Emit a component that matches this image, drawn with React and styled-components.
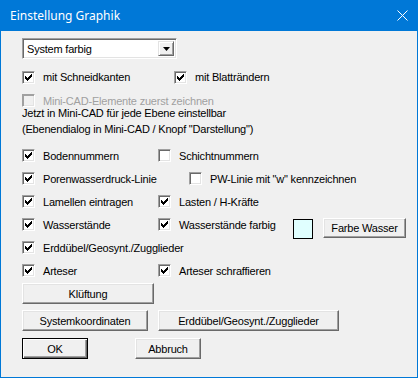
import React from "react";
import styled, { createGlobalStyle } from "styled-components";

const Global = createGlobalStyle`
  html, body { margin: 0; padding: 0; background: #f0f0f0; }
  * { box-sizing: border-box; }
`;

const Window = styled.div`
  width: 418px;
  height: 378px;
  border: 1px solid #0078d7;
  border-top: none;
  background: #f0f0f0;
  font-family: "Liberation Sans", Arial, sans-serif;
  font-size: 11px;
  letter-spacing: -0.2px;
  color: #000;
  display: flex;
  flex-direction: column;
`;

const TitleBar = styled.div`
  height: 31px;
  margin: 0 -1px;
  background: #0078d7;
  color: #fff;
  display: flex;
  align-items: center;
  justify-content: space-between;
  padding: 0 10px 0 10px;
  font-family: "Noto Sans", "Liberation Sans", sans-serif;
  font-size: 12px;
  letter-spacing: 0;
`;

const Body = styled.div`
  display: flex;
  flex-direction: column;
  padding-left: 21px;
`;

const Row = styled.div`
  display: flex;
  align-items: center;
  height: ${(p) => p.$h || 23}px;
  margin-top: ${(p) => p.$mt || 0}px;
`;

const Col = styled.div`
  width: ${(p) => p.$w}px;
  display: flex;
  align-items: center;
`;

const Check = styled.label`
  display: flex;
  align-items: center;
  gap: 8px;
  white-space: nowrap;
  color: ${(p) => (p.$disabled ? "#a0a0a0" : "#000")};
`;

const Box = styled.span`
  width: 13px;
  height: 13px;
  flex: none;
  display: flex;
  align-items: center;
  justify-content: center;
  background: ${(p) => (p.$disabled ? "#f0f0f0" : "#fff")};
  border: 1px solid;
  border-color: #a0a0a0 #fff #fff #a0a0a0;
  box-shadow: inset 1px 1px ${(p) => (p.$disabled ? "#a0a0a0" : "#696969")},
    inset -1px -1px #e3e3e3;
`;

const Label = styled.div`
  line-height: 13px;
  white-space: nowrap;
  margin-top: ${(p) => p.$mt || 0}px;
`;

const Button = styled.button`
  width: ${(p) => p.$w}px;
  height: ${(p) => p.$h || 21}px;
  margin-left: ${(p) => p.$ml || 0}px;
  padding: 0;
  font-family: inherit;
  font-size: 11px;
  letter-spacing: -0.2px;
  color: #000;
  background: #f0f0f0;
  border: 1px solid;
  border-color: ${(p) => (p.$default ? "#000" : "#fff #696969 #696969 #fff")};
  box-shadow: ${(p) =>
    p.$default
      ? "inset 1px 1px #fff, inset -1px -1px #696969, inset -2px -2px #a0a0a0"
      : "inset -1px -1px #a0a0a0, inset 1px 1px #e3e3e3"};
`;

const Select = styled.div`
  width: 155px;
  height: 21px;
  margin-top: 7px;
  background: #fff;
  border: 1px solid;
  border-color: #a0a0a0 #fff #fff #a0a0a0;
  box-shadow: inset 1px 1px #696969, inset -1px -1px #e3e3e3;
  display: flex;
  align-items: center;
  justify-content: space-between;
  padding: 2px 2px 2px 4px;
  font-size: 11px;
`;

const ArrowButton = styled.span`
  width: 16px;
  height: 15px;
  background: #f0f0f0;
  border: 1px solid;
  border-color: #e3e3e3 #696969 #696969 #e3e3e3;
  box-shadow: inset 1px 1px #fff, inset -1px -1px #a0a0a0;
  display: flex;
  align-items: center;
  justify-content: center;
`;

const Swatch = styled.div`
  width: 20px;
  height: 20px;
  margin-top: 8px;
  border: 1px solid #000;
  background: #e0ffff;
`;

const CheckMark = () => (
  <svg width="7" height="7" viewBox="0 0 7 7" shapeRendering="crispEdges">
    {[2, 3, 4, 3, 2, 1, 0].map((y, x) => (
      <rect key={x} x={x} y={y} width="1" height="3" fill="#000" />
    ))}
  </svg>
);

const CheckBox = ({ checked, disabled, children }) => (
  <Check $disabled={disabled}>
    <Box $disabled={disabled}>{checked && <CheckMark />}</Box>
    {children}
  </Check>
);

const App = () => (
  <Window>
    <Global />
    <TitleBar>
      <span>Einstellung Graphik</span>
      <svg width="11" height="11" viewBox="0 0 11 11">
        <path d="M0.5 0.5 L10.5 10.5 M10.5 0.5 L0.5 10.5" stroke="#fff" strokeWidth="1" />
      </svg>
    </TitleBar>
    <Body>
      <Select>
        <span>System farbig</span>
        <ArrowButton>
          <svg width="7" height="4" viewBox="0 0 7 4">
            <path d="M0 0 H7 L3.5 4 Z" fill="#000" />
          </svg>
        </ArrowButton>
      </Select>

      <Row $h={20} $mt={8}>
        <Col $w={152}>
          <CheckBox checked>mit Schneidkanten</CheckBox>
        </Col>
        <CheckBox checked>mit Blatträndern</CheckBox>
      </Row>

      <Row $h={13} $mt={7}>
        <CheckBox disabled>Mini-CAD-Elemente zuerst zeichnen</CheckBox>
      </Row>
      <Label>Jetzt in Mini-CAD für jede Ebene einstellbar</Label>
      <Label $mt={3}>(Ebenendialog in Mini-CAD / Knopf "Darstellung")</Label>

      <Row $mt={8}>
        <Col $w={136}>
          <CheckBox checked>Bodennummern</CheckBox>
        </Col>
        <CheckBox>Schichtnummern</CheckBox>
      </Row>
      <Row>
        <Col $w={167}>
          <CheckBox checked>Porenwasserdruck-Linie</CheckBox>
        </Col>
        <CheckBox>PW-Linie mit "w" kennzeichnen</CheckBox>
      </Row>
      <Row>
        <Col $w={136}>
          <CheckBox checked>Lamellen eintragen</CheckBox>
        </Col>
        <CheckBox checked>Lasten / H-Kräfte</CheckBox>
      </Row>
      <Row>
        <Col $w={136}>
          <CheckBox checked>Wasserstände</CheckBox>
        </Col>
        <Col $w={135}>
          <CheckBox checked>Wasserstände farbig</CheckBox>
        </Col>
        <Swatch />
        <Button $w={83} $h={20} $ml={10} style={{ marginTop: 7 }}>
          Farbe Wasser
        </Button>
      </Row>
      <Row>
        <CheckBox checked>Erddübel/Geosynt./Zugglieder</CheckBox>
      </Row>
      <Row>
        <Col $w={136}>
          <CheckBox checked>Arteser</CheckBox>
        </Col>
        <CheckBox checked>Arteser schraffieren</CheckBox>
      </Row>

      <Row $h={21} $mt={1}>
        <Button $w={132}>Klüftung</Button>
      </Row>
      <Row $h={21} $mt={6}>
        <Button $w={126}>Systemkoordinaten</Button>
        <Button $w={181} $ml={10}>Erddübel/Geosynt./Zugglieder</Button>
      </Row>
      <Row $h={21} $mt={7}>
        <Button $w={66} $default>OK</Button>
        <Button $w={66} $ml={47}>Abbruch</Button>
      </Row>
    </Body>
  </Window>
);

export default App;
